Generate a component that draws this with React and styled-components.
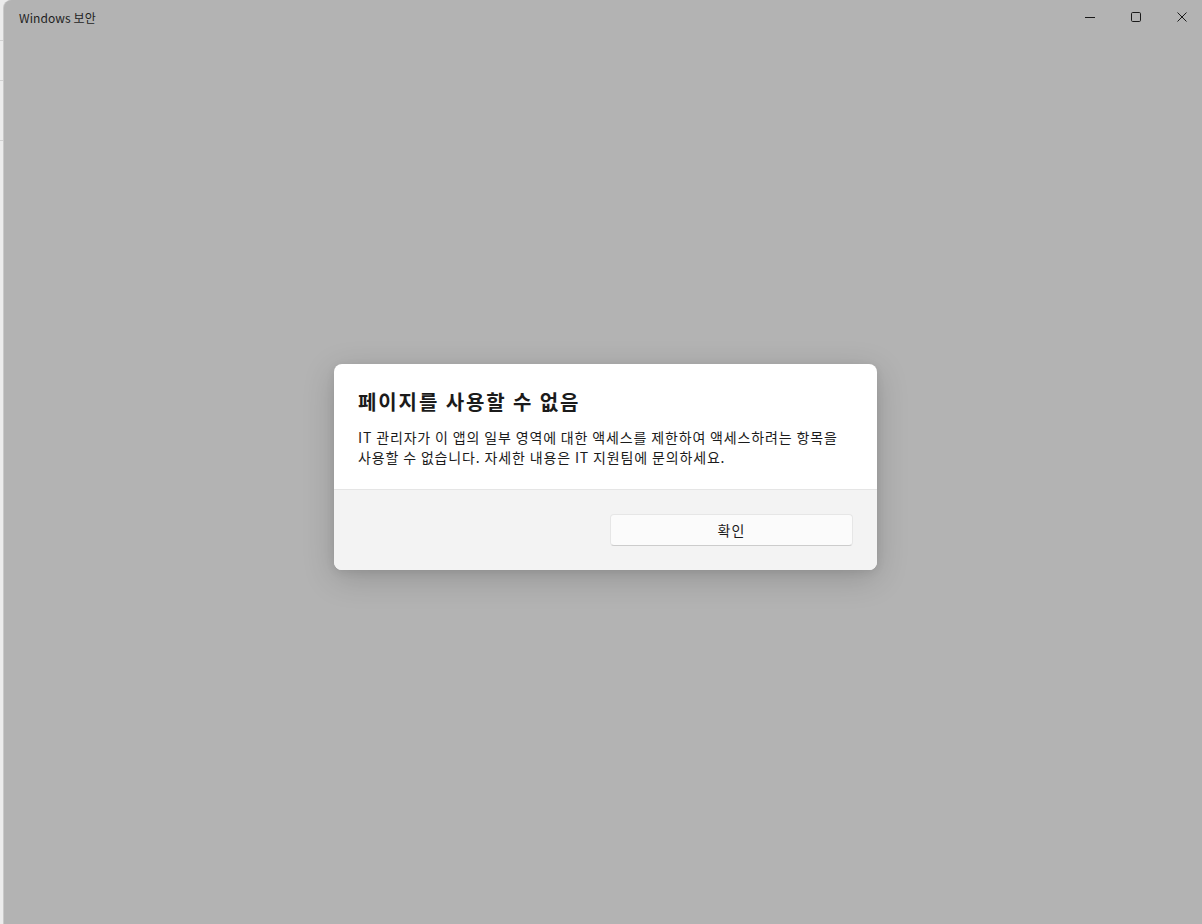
import React from 'react';
import styled, { createGlobalStyle } from 'styled-components';

const GlobalStyle = createGlobalStyle`
  html, body {
    margin: 0;
    padding: 0;
    height: 100%;
    overflow: hidden;
  }
  body {
    font-family: "Noto Sans CJK KR", "Noto Sans", sans-serif;
    background: #e6e6e6;
  }
  #root {
    height: 100%;
  }
`;

const Desktop = styled.div`
  display: flex;
  height: 924px;
  background: #ececec;
`;

const BehindStrip = styled.div`
  width: 4px;
  display: flex;
  flex-direction: column;
  padding-top: 40px;
`;

const StripLine = styled.div`
  height: 1px;
  background: #d2d2d2;
  margin-bottom: ${(p) => p.$gap}px;
`;

const Window = styled.div`
  flex: 1;
  display: flex;
  flex-direction: column;
  background: #b3b3b3;
  border-top-left-radius: 8px;
  box-shadow: -1px 0 0 #c9c9c9;
  overflow: hidden;
`;

const TitleBar = styled.div`
  display: flex;
  align-items: flex-start;
  justify-content: space-between;
  height: 36px;
`;

const Title = styled.div`
  font-family: "Noto Sans CJK KR", "Noto Sans", sans-serif;
  font-size: 12px;
  color: #1f1f1f;
  padding: 9px 0 0 15px;
  letter-spacing: 0.1px;
`;

const Controls = styled.div`
  display: flex;
  margin-right: -3px;
`;

const CtrlButton = styled.div`
  width: 46px;
  height: 34px;
  display: flex;
  align-items: center;
  justify-content: center;
  color: #1a1a1a;
`;

const Center = styled.div`
  flex: 1;
  display: flex;
  align-items: flex-start;
  justify-content: center;
  padding-top: 328px;
`;

const Dialog = styled.div`
  width: 543px;
  margin-left: 5px;
  background: #ffffff;
  border-radius: 8px;
  overflow: hidden;
  box-shadow: 0 8px 32px rgba(0, 0, 0, 0.18), 0 2px 8px rgba(0, 0, 0, 0.08);
`;

const Body = styled.div`
  padding: 24px 24px 22px 24px;
  border-bottom: 1px solid #e5e5e5;
`;

const Heading = styled.h2`
  margin: 0;
  font-size: 20px;
  line-height: 28px;
  font-weight: 600;
  color: #1b1b1b;
  letter-spacing: 1.9px;
`;

const Message = styled.p`
  margin: 11px 0 0 0;
  font-size: 14px;
  line-height: 20px;
  color: #1b1b1b;
  letter-spacing: 0.85px;
  white-space: nowrap;
`;

const Footer = styled.div`
  background: #f3f3f3;
  padding: 24px;
  display: grid;
  grid-template-columns: 1fr 243px;
  gap: 8px;
`;

const OkButton = styled.button`
  grid-column: 2;
  height: 32px;
  border: 1px solid #e6e6e6;
  border-bottom-color: #cccccc;
  border-radius: 4px;
  background: #fbfbfb;
  font-family: "Noto Sans CJK KR", "Noto Sans", sans-serif;
  font-size: 14px;
  letter-spacing: 1px;
  color: #1b1b1b;
  padding: 0;
`;

const App = () => {
  return (
    <>
      <GlobalStyle />
      <Desktop>
        <BehindStrip>
          <StripLine $gap={39} />
          <StripLine $gap={59} />
          <StripLine $gap={0} />
        </BehindStrip>
        <Window>
          <TitleBar>
            <Title>Windows 보안</Title>
            <Controls>
              <CtrlButton>
                <svg width="10" height="10" viewBox="0 0 10 10">
                  <path d="M0 5.5h10" stroke="currentColor" strokeWidth="1" />
                </svg>
              </CtrlButton>
              <CtrlButton>
                <svg width="10" height="10" viewBox="0 0 10 10">
                  <rect x="0.5" y="0.5" width="9" height="9" rx="1.2" fill="none" stroke="currentColor" strokeWidth="1" />
                </svg>
              </CtrlButton>
              <CtrlButton>
                <svg width="10" height="10" viewBox="0 0 10 10">
                  <path d="M0.5 0.5l9 9M9.5 0.5l-9 9" stroke="currentColor" strokeWidth="1" />
                </svg>
              </CtrlButton>
            </Controls>
          </TitleBar>
          <Center>
            <Dialog>
              <Body>
                <Heading>페이지를 사용할 수 없음</Heading>
                <Message>
                  IT 관리자가 이 앱의 일부 영역에 대한 액세스를 제한하여 액세스하려는 항목을
                  <br />
                  사용할 수 없습니다. 자세한 내용은 IT 지원팀에 문의하세요.
                </Message>
              </Body>
              <Footer>
                <OkButton>확인</OkButton>
              </Footer>
            </Dialog>
          </Center>
        </Window>
      </Desktop>
    </>
  );
};

export default App;
